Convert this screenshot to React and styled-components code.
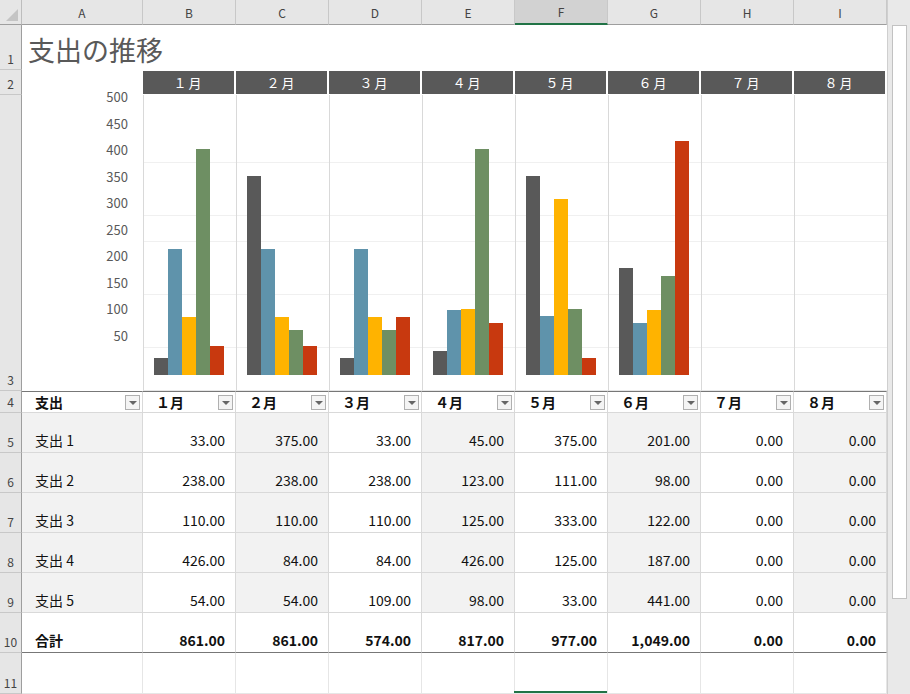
import React from "react";
import styled, { createGlobalStyle } from "styled-components";

const GlobalStyle = createGlobalStyle`
  html, body { margin: 0; padding: 0; background: #fff; }
  body { font-family: "Noto Sans CJK JP", "Noto Sans", sans-serif; overflow: hidden; }
`;

const COLS = ["A", "B", "C", "D", "E", "F", "G", "H", "I"];
const MONTHS = ["１月", "２月", "３月", "４月", "５月", "６月", "７月", "８月"];
const DATA = [
  [33, 375, 33, 45, 375, 201, 0, 0],
  [238, 238, 238, 123, 111, 98, 0, 0],
  [110, 110, 110, 125, 333, 122, 0, 0],
  [426, 84, 84, 426, 125, 187, 0, 0],
  [54, 54, 109, 98, 33, 441, 0, 0],
];
const TOTALS = [861, 861, 574, 817, 977, 1049, 0, 0];
const COLORS = ["#595959", "#5f93ab", "#ffb300", "#6e8f63", "#c8390f"];
const SCALE = 265 / 500;
const fmt = (n) => n.toLocaleString("en-US", { minimumFractionDigits: 2, maximumFractionDigits: 2 });

const Sheet = styled.div`
  display: flex;
  width: 910px;
  height: 694px;
  overflow: hidden;
`;
const Grid = styled.div`
  display: grid;
  grid-template-columns: 22px 121px repeat(8, 93px);
  grid-template-rows: 25px 45px 25px 296px 22px repeat(6, 40px) 41px;
  width: 887px;
  flex: none;
`;
const Corner = styled.div`
  background: #e6e6e6;
  border-right: 1px solid #bdbdbd;
  border-bottom: 1px solid #9e9e9e;
  position: relative;
  &::after {
    content: "";
    position: absolute;
    right: 3px;
    bottom: 3px;
    border-left: 12px solid transparent;
    border-bottom: 12px solid #c4c4c4;
  }
`;
const ColHead = styled.div`
  background: ${(p) => (p.$sel ? "#d2d2d2" : "#e6e6e6")};
  border-right: 1px solid #c8c8c8;
  border-bottom: ${(p) => (p.$sel ? "2px solid #217346" : "1px solid #9e9e9e")};
  display: flex;
  align-items: center;
  justify-content: center;
  font-size: 12px;
  color: #444;
`;
const RowHead = styled.div`
  background: #e6e6e6;
  border-right: 1px solid #9e9e9e;
  border-bottom: 1px solid #c8c8c8;
  display: flex;
  align-items: flex-end;
  justify-content: center;
  padding-bottom: 2px;
  font-size: 12px;
  color: #444;
  box-sizing: border-box;
`;
const Title = styled.div`
  grid-column: 2 / 11;
  font-size: 27px;
  color: #595959;
  padding-left: 6px;
  display: flex;
  align-items: flex-end;
  padding-bottom: 1px;
`;
const Blank = styled.div``;
const MonthBar = styled.div`
  background: #595959;
  color: #fff;
  font-size: 13px;
  letter-spacing: 2px;
  display: flex;
  align-items: center;
  justify-content: center;
  margin: 1px 2px 1px 0;
`;
const Axis = styled.div`
  position: relative;
`;
const AxisLabel = styled.span`
  position: absolute;
  right: 15px;
  font-size: 13px;
  color: #595959;
  transform: translateY(-50%);
`;
const Plot = styled.div`
  border-left: 1px solid #d9d9d9;
  border-bottom: 1px solid #e6e6e6;
  background: repeating-linear-gradient(
    to top,
    transparent 0,
    transparent 26px,
    #f0f0f0 26px,
    #f0f0f0 26.5px
  );
  background-position: 0 -16px;
  display: flex;
  align-items: flex-end;
  padding: 0 0 15px 10px;
  box-sizing: border-box;
`;
const Bar = styled.div`
  width: 14px;
  background: ${(p) => p.$c};
`;
const Cell = styled.div`
  background: ${(p) => (p.$band ? "#f2f2f2" : "#fff")};
  border-right: 1px solid #d9d9d9;
  border-bottom: 1px solid ${(p) => (p.$last ? "#777" : "#d9d9d9")};
  border-top: ${(p) => (p.$top ? "1px solid #777" : "none")};
  display: flex;
  align-items: flex-end;
  justify-content: ${(p) => (p.$left ? "flex-start" : "flex-end")};
  padding: 0 10px 2px 13px;
  font-size: 14px;
  font-weight: ${(p) => (p.$bold ? 700 : 400)};
  color: #111;
  box-sizing: border-box;
  position: relative;
`;
const HeadCell = styled(Cell)`
  align-items: center;
  justify-content: flex-start;
  padding: 0 0 0 13px;
`;
const Filter = styled.span`
  position: absolute;
  right: 2px;
  top: 3px;
  width: 15px;
  height: 15px;
  border: 1px solid #b0b0b0;
  background: #f4f4f4;
  box-sizing: border-box;
  &::after {
    content: "";
    position: absolute;
    left: 3px;
    top: 5px;
    border-left: 4px solid transparent;
    border-right: 4px solid transparent;
    border-top: 4px solid #666;
  }
`;
const EmptyCell = styled.div`
  border-right: 1px solid #e6e6e6;
  border-bottom: 1px solid #e6e6e6;
  position: relative;
  ${(p) => p.$sel && `&::after{content:"";position:absolute;left:-1px;right:0;bottom:0;height:2px;background:#217346;}`}
`;
const Scroll = styled.div`
  width: 23px;
  background: #e9e9e9;
  border-left: 1px solid #cfcfcf;
  box-sizing: border-box;
  padding: 25px 3px 0 4px;
`;
const Thumb = styled.div`
  height: 572px;
  background: #fff;
  border: 1px solid #c2c2c2;
`;

export default function App() {
  const ticks = [500, 450, 400, 350, 300, 250, 200, 150, 100, 50];
  return (
    <Sheet>
      <GlobalStyle />
      <Grid>
        <Corner />
        {COLS.map((c) => (
          <ColHead key={c} $sel={c === "F"}>{c}</ColHead>
        ))}
        <RowHead>1</RowHead>
        <Title>支出の推移</Title>
        <RowHead>2</RowHead>
        <Blank />
        {MONTHS.map((m) => (
          <MonthBar key={m}>{m}</MonthBar>
        ))}
        <RowHead>3</RowHead>
        <Axis>
          {ticks.map((t) => (
            <AxisLabel key={t} style={{ top: 281 - t * SCALE - 15 }}>{t}</AxisLabel>
          ))}
        </Axis>
        {MONTHS.map((m, i) => (
          <Plot key={m}>
            {DATA.map((row, k) =>
              row[i] ? <Bar key={k} $c={COLORS[k]} style={{ height: row[i] * SCALE }} /> : null
            )}
          </Plot>
        ))}
        <RowHead>4</RowHead>
        <HeadCell $top $bold>支出<Filter /></HeadCell>
        {MONTHS.map((m) => (
          <HeadCell key={m} $top $bold>{m}<Filter /></HeadCell>
        ))}
        {DATA.map((row, r) => (
          <React.Fragment key={r}>
            <RowHead>{r + 5}</RowHead>
            <Cell $left $band>支出 {r + 1}</Cell>
            {row.map((v, i) => (
              <Cell key={i} $band={i % 2 === 1}>{fmt(v)}</Cell>
            ))}
          </React.Fragment>
        ))}
        <RowHead>10</RowHead>
        <Cell $left $bold $last>合計</Cell>
        {TOTALS.map((v, i) => (
          <Cell key={i} $bold $last>{fmt(v)}</Cell>
        ))}
        <RowHead>11</RowHead>
        {COLS.map((c) => (
          <EmptyCell key={c} $sel={c === "F"} />
        ))}
      </Grid>
      <Scroll>
        <Thumb />
      </Scroll>
    </Sheet>
  );
}
